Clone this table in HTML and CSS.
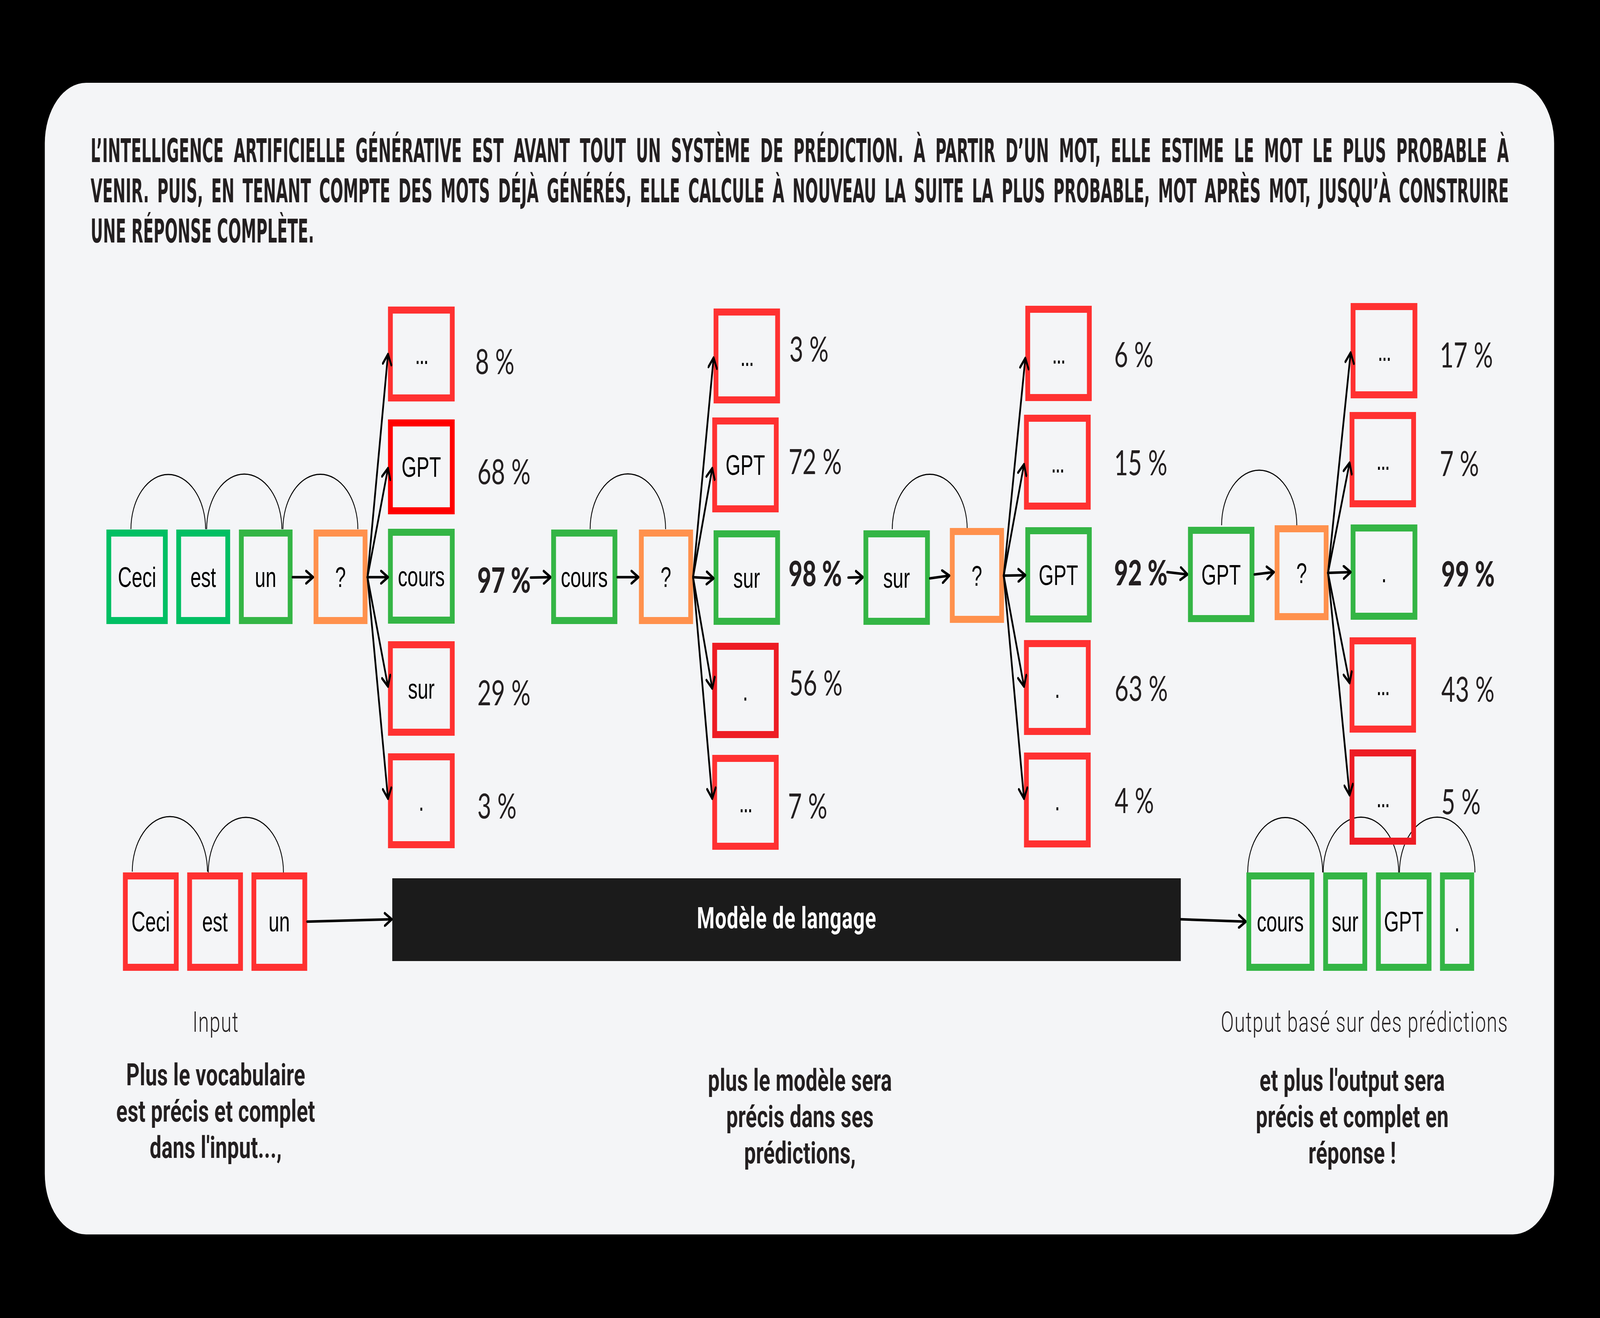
FILE: index.html
```html
<!DOCTYPE html>
<html lang="fr">
<head>
<meta charset="utf-8">
<title>L'IA générative, un système de prédiction</title>
<link rel="stylesheet" href="styles.css">
</head>
<body>
<div class="frame">
<div class="page" id="page">
<main class="card">
  <h1 class="heading">
    <span class="hl">L’INTELLIGENCE ARTIFICIELLE GÉNÉRATIVE EST AVANT TOUT UN SYSTÈME DE PRÉDICTION. À PARTIR D’UN MOT, ELLE ESTIME LE MOT LE PLUS PROBABLE À</span>
    <span class="hl">VENIR. PUIS, EN TENANT COMPTE DES MOTS DÉJÀ GÉNÉRÉS, ELLE CALCULE À NOUVEAU LA SUITE LA PLUS PROBABLE, MOT APRÈS MOT, JUSQU’À CONSTRUIRE</span>
    <span class="hl hl-last">UNE RÉPONSE COMPLÈTE.</span>
  </h1>

  <svg class="diagram" viewBox="168 680 5660 1840" xmlns="http://www.w3.org/2000/svg">
    <defs>
      <marker id="head" markerUnits="userSpaceOnUse" viewBox="0 0 34 38" markerWidth="34" markerHeight="38" refX="30" refY="19" orient="auto">
        <path class="head" d="M4 3 L30 19 L4 35"/>
      </marker>
    </defs>

    <!-- arcs -->
    <path class="arc" d="M491 1355 A140 140 0 0 1 771 1355"/>
    <path class="arc" d="M775 1355 A141 141 0 0 1 1057 1355"/>
    <path class="arc" d="M1061 1355 A140.5 140.5 0 0 1 1342 1355"/>
    <path class="arc" d="M2213 1355 A141.5 141.5 0 0 1 2496 1355"/>
    <path class="arc" d="M3346 1355 A140.5 140.5 0 0 1 3627 1355"/>
    <path class="arc" d="M4581 1345 A141 141 0 0 1 4863 1345"/>
    <path class="arc" d="M496 2232 A141 141 0 0 1 778 2232"/>
    <path class="arc" d="M781 2234 A141 141 0 0 1 1063 2234"/>
    <path class="arc" d="M4679 2234 A140.5 140.5 0 0 1 4960 2234"/>
    <path class="arc" d="M4962 2234 A141.5 141.5 0 0 1 5245 2234"/>
    <path class="arc" d="M5248 2234 A141.5 141.5 0 0 1 5531 2234"/>

    <!-- group 1 -->
    <rect class="box c-teal" x="408" y="1365" width="212" height="224"/>
    <text class="word" x="514" y="1503">Ceci</text>
    <rect class="box c-teal" x="670" y="1365" width="184" height="224"/>
    <text class="word" x="762" y="1503">est</text>
    <rect class="box c-green" x="905" y="1365" width="183" height="224"/>
    <text class="word" x="996" y="1503">un</text>
    <rect class="box c-orange" x="1185" y="1365" width="184" height="224"/>
    <text class="word" x="1277" y="1503">?</text>

    <rect class="box c-red" x="1464" y="794" width="232" height="225"/>
    <text class="word dots" x="1580" y="932">...</text>
    <rect class="box c-pure" x="1464" y="1083" width="232" height="225"/>
    <text class="word" x="1580" y="1221">GPT</text>
    <rect class="box c-green" x="1464" y="1363" width="232" height="225"/>
    <text class="word" x="1580" y="1501">cours</text>
    <rect class="box c-red" x="1464" y="1651" width="232" height="224"/>
    <text class="word" x="1580" y="1789">sur</text>
    <rect class="box c-red" x="1464" y="1938" width="232" height="225"/>
    <text class="word" x="1580" y="2076">.</text>

    <text class="pct" x="1782" y="958">8 %</text>
    <text class="pct" x="1790" y="1240">68 %</text>
    <text class="pct pct-b" x="1790" y="1518">97 %</text>
    <text class="pct" x="1790" y="1806">29 %</text>
    <text class="pct" x="1790" y="2096">3 %</text>

    <line class="arrow" x1="1097" y1="1478" x2="1174" y2="1478"/>
    <line class="arrow" x1="1378" y1="1478" x2="1455" y2="907"/>
    <line class="arrow" x1="1378" y1="1478" x2="1455" y2="1199"/>
    <line class="arrow" x1="1378" y1="1478" x2="1455" y2="1478"/>
    <line class="arrow" x1="1378" y1="1478" x2="1455" y2="1758"/>
    <line class="arrow" x1="1378" y1="1478" x2="1455" y2="2045"/>
    <line class="arrow" x1="1990" y1="1479" x2="2065" y2="1478"/>

    <!-- group 2 -->
    <rect class="box c-green" x="2076" y="1365" width="230" height="224"/>
    <text class="word" x="2191" y="1503">cours</text>
    <rect class="box c-orange" x="2405" y="1365" width="185" height="224"/>
    <text class="word" x="2497" y="1503">?</text>

    <rect class="box c-red" x="2685" y="799" width="231" height="225"/>
    <text class="word dots" x="2800" y="937">...</text>
    <rect class="box c-red" x="2680" y="1078" width="231" height="225"/>
    <text class="word" x="2795" y="1216">GPT</text>
    <rect class="box c-green" x="2685" y="1367" width="231" height="224"/>
    <text class="word" x="2800" y="1505">sur</text>
    <rect class="box c-dark" x="2680" y="1655" width="231" height="226"/>
    <text class="word" x="2795" y="1794">.</text>
    <rect class="box c-red" x="2680" y="1942" width="231" height="225"/>
    <text class="word dots" x="2795" y="2080">...</text>

    <text class="pct" x="2960" y="926">3 %</text>
    <text class="pct" x="2957" y="1214">72 %</text>
    <text class="pct pct-b" x="2957" y="1501">98 %</text>
    <text class="pct" x="2960" y="1781">56 %</text>
    <text class="pct" x="2955" y="2096">7 %</text>

    <line class="arrow" x1="2315" y1="1478" x2="2394" y2="1478"/>
    <line class="arrow" x1="2599" y1="1478" x2="2676" y2="916"/>
    <line class="arrow" x1="2599" y1="1478" x2="2671" y2="1199"/>
    <line class="arrow" x1="2599" y1="1478" x2="2676" y2="1481"/>
    <line class="arrow" x1="2599" y1="1478" x2="2671" y2="1763"/>
    <line class="arrow" x1="2599" y1="1478" x2="2671" y2="2045"/>
    <line class="arrow" x1="3181" y1="1479" x2="3236" y2="1478"/>

    <!-- group 3 -->
    <rect class="box c-green" x="3247" y="1367" width="231" height="224"/>
    <text class="word" x="3362" y="1505">sur</text>
    <rect class="box c-orange" x="3571" y="1361" width="185" height="225"/>
    <text class="word" x="3663" y="1500">?</text>

    <rect class="box c-red" x="3854" y="792" width="231" height="226"/>
    <text class="word dots" x="3969" y="931">...</text>
    <rect class="box c-red" x="3849" y="1071" width="232" height="225"/>
    <text class="word dots" x="3965" y="1210">...</text>
    <rect class="box c-green" x="3854" y="1359" width="231" height="226"/>
    <text class="word" x="3969" y="1498">GPT</text>
    <rect class="box c-red" x="3849" y="1648" width="232" height="225"/>
    <text class="word" x="3965" y="1787">.</text>
    <rect class="box c-red" x="3849" y="1936" width="232" height="225"/>
    <text class="word" x="3965" y="2075">.</text>

    <text class="pct" x="4178" y="940">6 %</text>
    <text class="pct" x="4178" y="1217">15 %</text>
    <text class="pct pct-b" x="4178" y="1499">92 %</text>
    <text class="pct" x="4180" y="1795">63 %</text>
    <text class="pct" x="4180" y="2082">4 %</text>

    <line class="arrow" x1="3487" y1="1481" x2="3560" y2="1474"/>
    <line class="arrow" x1="3764" y1="1474" x2="3845" y2="917"/>
    <line class="arrow" x1="3764" y1="1474" x2="3840" y2="1189"/>
    <line class="arrow" x1="3764" y1="1474" x2="3845" y2="1473"/>
    <line class="arrow" x1="3764" y1="1474" x2="3840" y2="1758"/>
    <line class="arrow" x1="3764" y1="1474" x2="3840" y2="2045"/>
    <line class="arrow" x1="4377" y1="1465" x2="4453" y2="1471"/>

    <!-- group 4 -->
    <rect class="box c-green" x="4464" y="1358" width="231" height="226"/>
    <text class="word" x="4579" y="1497">GPT</text>
    <rect class="box c-orange" x="4789" y="1354" width="184" height="225"/>
    <text class="word" x="4881" y="1493">?</text>

    <rect class="box c-red" x="5074" y="785" width="232" height="226"/>
    <text class="word dots" x="5190" y="924">...</text>
    <rect class="box c-red" x="5070" y="1064" width="231" height="226"/>
    <text class="word dots" x="5185" y="1203">...</text>
    <rect class="box c-green" x="5074" y="1352" width="232" height="226"/>
    <text class="word" x="5190" y="1491">.</text>
    <rect class="box c-red" x="5070" y="1641" width="231" height="226"/>
    <text class="word dots" x="5185" y="1780">...</text>
    <rect class="box c-dark" x="5070" y="1928" width="231" height="226"/>
    <text class="word dots" x="5185" y="2067">...</text>

    <text class="pct" x="5399" y="941">17 %</text>
    <text class="pct" x="5399" y="1219">7 %</text>
    <text class="pct pct-b" x="5405" y="1502">99 %</text>
    <text class="pct" x="5405" y="1797">43 %</text>
    <text class="pct" x="5405" y="2085">5 %</text>

    <line class="arrow" x1="4704" y1="1471" x2="4777" y2="1465"/>
    <line class="arrow" x1="4980" y1="1467" x2="5065" y2="903"/>
    <line class="arrow" x1="4980" y1="1467" x2="5061" y2="1185"/>
    <line class="arrow" x1="4980" y1="1467" x2="5065" y2="1465"/>
    <line class="arrow" x1="4980" y1="1467" x2="5061" y2="1749"/>
    <line class="arrow" x1="4980" y1="1467" x2="5061" y2="2036"/>

    <!-- bottom row -->
    <rect class="box c-red" x="470" y="2243" width="191" height="234"/>
    <text class="word" x="565" y="2385">Ceci</text>
    <rect class="box c-red" x="711" y="2243" width="191" height="234"/>
    <text class="word" x="806" y="2385">est</text>
    <rect class="box c-red" x="952" y="2243" width="191" height="234"/>
    <text class="word" x="1047" y="2385">un</text>

    <rect class="bar" x="1471" y="2249" width="2957" height="212"/>
    <text class="bar-label" x="2950" y="2377">Modèle de langage</text>

    <line class="arrow" x1="1152" y1="2360" x2="1469" y2="2354"/>
    <line class="arrow" x1="4428" y1="2354" x2="4672" y2="2360"/>

    <rect class="box c-green" x="4683" y="2243" width="237" height="234"/>
    <text class="word" x="4801" y="2385">cours</text>
    <rect class="box c-green" x="4971" y="2243" width="147" height="234"/>
    <text class="word" x="5044" y="2385">sur</text>
    <rect class="box c-green" x="5169" y="2243" width="190" height="234"/>
    <text class="word" x="5264" y="2385">GPT</text>
    <rect class="box c-green" x="5409" y="2243" width="110" height="234"/>
    <text class="word" x="5464" y="2385">.</text>
  </svg>

  <div class="captions">
    <section class="col col-in">
      <p class="label">Input</p>
      <p class="note">Plus le vocabulaire<br>est précis et complet<br>dans l'input...,</p>
    </section>
    <section class="col col-model">
      <p class="label"></p>
      <p class="note">plus le modèle sera<br>précis dans ses<br>prédictions,</p>
    </section>
    <section class="col col-out">
      <p class="label">Output basé sur des prédictions</p>
      <p class="note">et plus l'output sera<br>précis et complet en<br>réponse !</p>
    </section>
  </div>
</main>
</div>
</div>
<script src="script.js"></script>
</body>
</html>
```

FILE: styles.css
```css
html, body {
  margin: 0;
  padding: 0;
  background: #000;
  overflow: hidden;
}

/* window-sized frame that clips the scaled sheet */
.frame {
  width: 100vw;
  height: 100vh;
  overflow: hidden;
}

/* the design is drawn on a 6000 x 3375 sheet, fitted to the window by script.js */
.page {
  width: 6000px;
  height: 3375px;
  padding-top: 212px;
  padding-left: 168px;
  box-sizing: border-box;
  background: #000;
  transform-origin: 0 0;
}

.card {
  box-sizing: border-box;
  width: 5660px;
  height: 2949px;
  padding-top: 123px;
  border-radius: 155px;
  background: #f4f5f7;
  overflow: hidden;
}

.heading {
  margin: 0 0 0 172px;
  width: 7044px;
  transform: scaleX(0.755);
  transform-origin: 0 0;
  font-family: "Liberation Sans Narrow", "DejaVu Sans Condensed", "Liberation Sans", sans-serif;
  font-stretch: condensed;
  font-weight: 700;
  font-size: 84px;
  line-height: 103px;
  color: #231f20;
}

.hl {
  display: block;
  text-align: justify;
  text-align-last: justify;
}

.hl-last {
  text-align-last: left;
}

.diagram {
  display: block;
  width: 5660px;
  height: 1840px;
  margin-top: 36px;
}

.box {
  fill: none;
  stroke-width: 18;
}

.c-teal { stroke: #00bf63; }
.c-green { stroke: #34b545; }
.c-red { stroke: #ff3131; }
.c-pure { stroke: #ff0000; }
.c-dark { stroke: #ed1c24; }
.c-orange { stroke: #ff914d; }

.word {
  font-family: "Liberation Sans", Arial, sans-serif;
  font-size: 72px;
  fill: #000;
  text-anchor: middle;
}

.dots {
  letter-spacing: -4px;
}

.pct {
  font-family: Lato, "Open Sans", sans-serif;
  font-size: 90px;
  fill: #231f20;
}

.pct-b {
  font-weight: 900;
}

.arc {
  fill: none;
  stroke: #000;
  stroke-width: 3;
}

.arrow {
  fill: none;
  stroke: #000;
  stroke-width: 6.5;
  stroke-linecap: round;
  marker-end: url(#head);
}

.head {
  fill: none;
  stroke: #000;
  stroke-width: 7;
  stroke-linecap: round;
  stroke-linejoin: round;
}

.bar {
  fill: #1b1b1b;
}

.bar-label {
  font-family: Roboto, "Liberation Sans", sans-serif;
  font-weight: 700;
  font-size: 76px;
  letter-spacing: 1.5px;
  fill: #fff;
  text-anchor: middle;
}

.captions {
  display: flex;
  margin-top: 55px;
  font-family: Roboto, "Liberation Sans", sans-serif;
  color: #231f20;
}

.col {
  flex: none;
  text-align: center;
}

.col-in { width: 1282px; }
.col-model { width: 2000px; margin-left: 550px; }
.col-out { width: 1400px; margin-left: 400px; }

.label {
  box-sizing: border-box;
  margin: 0;
  min-height: 86px;
  font-weight: 300;
  font-size: 72px;
  line-height: 86px;
  letter-spacing: 2.5px;
}

.col-out .label {
  padding-left: 34px;
}

.note {
  box-sizing: border-box;
  margin: 59px 0 0;
  font-weight: 700;
  font-size: 78px;
  line-height: 93px;
  letter-spacing: 0.5px;
}

.col-in .note {
  margin-top: 45px;
}

.col-out .note {
  padding-right: 58px;
}
```

FILE: script.js
```js
// Fit the 6000 x 3375 sheet to whatever window the page is opened in.
(function () {
  var page = document.getElementById('page');
  function fit() {
    var sx = window.innerWidth / 6000;
    var sy = window.innerHeight / 3375;
    page.style.transform = 'scale(' + sx + ',' + sy + ')';
  }
  fit();
  window.addEventListener('resize', fit);
})();
```
